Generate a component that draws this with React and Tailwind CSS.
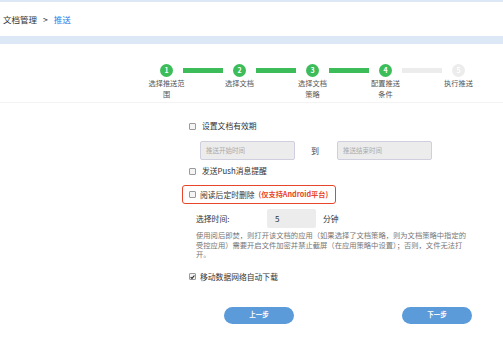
import React from "react";

const steps = [
  { n: "1", label: ["选择推送范", "围"], done: true },
  { n: "2", label: ["选择文档"], done: true },
  { n: "3", label: ["选择文档", "策略"], done: true },
  { n: "4", label: ["配置推送", "条件"], done: true },
  { n: "5", label: ["执行推送"], done: false },
];

function Box({ checked }) {
  return (
    <span className="w-[7px] h-[7px] border border-[#9a9a9a] bg-[#f4f4f4] rounded-[1px] flex items-center justify-center shrink-0">
      {checked && (
        <svg width="6" height="6" viewBox="0 0 6 6">
          <path d="M0.8 3.1 L2.4 4.7 L5.3 1.2" stroke="#222" strokeWidth="1.3" fill="none" />
        </svg>
      )}
    </span>
  );
}

export default function App() {
  return (
    <div className="w-[503px] h-[342px] bg-white overflow-hidden text-[#333] font-['Noto_Sans_CJK_SC','Noto_Sans',sans-serif]">
      <div className="h-[2px] bg-[#dce8f6]" />
      <div className="h-[34px] flex items-center pl-[3px] text-[8.5px] text-[#333]">
        <span>文档管理</span>
        <span className="mx-[6px]">&gt;</span>
        <span className="text-[#2f7be6]">推送</span>
      </div>
      <div className="h-[8px] bg-[#dce8f6]" />

      <div className="flex pl-[130px] pt-[20px] h-[58px]">
        {steps.map((s, i) => {
          const leftColor = i === 0 ? "bg-transparent" : s.done ? "bg-[#3dbd5a]" : "bg-[#ececec]";
          const next = steps[i + 1];
          const rightColor = !next ? "bg-transparent" : next.done ? "bg-[#3dbd5a]" : "bg-[#ececec]";
          return (
            <div key={s.n} className="w-[73px] flex flex-col items-center">
              <div className="flex items-center w-full h-[13px]">
                <div className="flex-1 flex justify-start">
                  <div className={`h-[5px] w-[20px] ${leftColor}`} />
                </div>
                <div
                  className={`w-[13px] h-[13px] rounded-full flex items-center justify-center text-white text-[7px] font-bold mx-[10px] ${
                    s.done ? "bg-[#3dbd5a]" : "bg-[#ececec]"
                  }`}
                >
                  {s.n}
                </div>
                <div className="flex-1 flex justify-end">
                  <div className={`h-[5px] w-[20px] ${rightColor}`} />
                </div>
              </div>
              <div className="mt-[1px] text-[7.2px] leading-[11px] text-[#555] text-center whitespace-nowrap">
                {s.label.map((l, k) => (
                  <div key={k}>{l}</div>
                ))}
              </div>
            </div>
          );
        })}
      </div>
      <div className="h-[1px] bg-[#f3f3f3]" />

      <div className="pl-[189px] text-[7.8px] text-[#333]">
        <div className="mt-[17px] h-[12px] flex items-center gap-[6px]">
          <Box />
          <span>设置文档有效期</span>
        </div>

        <div className="mt-[9px] flex items-center ml-[11px] h-[19px]">
          <div className="w-[95px] h-[19px] bg-[#ececec] border border-[#cfcfe0] rounded-[2px] flex items-center pl-[5px] text-[6.5px] text-[#aaa]">
            推送开始时间
          </div>
          <span className="ml-[16px] w-[26px] text-[8px] text-[#444]">到</span>
          <div className="w-[95px] h-[19px] bg-[#ececec] border border-[#cfcfe0] rounded-[2px] flex items-center pl-[5px] text-[6.5px] text-[#aaa]">
            推送结束时间
          </div>
        </div>

        <div className="mt-[5px] h-[12px] flex items-center gap-[6px]">
          <Box />
          <span>发送Push消息提醒</span>
        </div>

        <div className="mt-[8px] -ml-[7px] w-[154px] h-[19px] border border-[#e8452a] rounded-[3px] flex items-center pl-[6px] gap-[4px]">
          <Box />
          <span>阅读后定时删除</span>
          <span className="text-[#e8452a] text-[7.2px] font-bold">(仅支持Android平台)</span>
        </div>

        <div className="mt-[5px] ml-[7px] flex items-center h-[19px]">
          <span className="w-[71px]">选择时间:</span>
          <div className="w-[49px] h-[19px] bg-[#ececec] rounded-[2px] flex items-center pl-[8px] text-[8px]">5</div>
          <span className="ml-[7px]">分钟</span>
        </div>

        <div className="mt-[3px] ml-[7px] text-[7.3px] leading-[9.5px] text-[#777] whitespace-nowrap">
          <div>使用阅后即焚，则打开该文档的应用（如果选择了文档策略，则为文档策略中指定的</div>
          <div>受控应用）需要开启文件加密并禁止截屏（在应用策略中设置）；否则，文件无法打</div>
          <div>开。</div>
        </div>

        <div className="mt-[11px] h-[12px] flex items-center gap-[4px]">
          <Box checked />
          <span>移动数据网络自动下载</span>
        </div>
      </div>

      <div className="mt-[24px] flex pl-[224px] gap-[108px]">
        <button className="w-[70px] h-[17px] rounded-full bg-[#5b9bd9] text-white text-[6.5px] font-bold flex items-center justify-center">
          上一步
        </button>
        <button className="w-[70px] h-[17px] rounded-full bg-[#5b9bd9] text-white text-[6.5px] font-bold flex items-center justify-center">
          下一步
        </button>
      </div>
      <div className="mt-[18px] h-[1px] bg-[#e6eef7]" />
    </div>
  );
}
